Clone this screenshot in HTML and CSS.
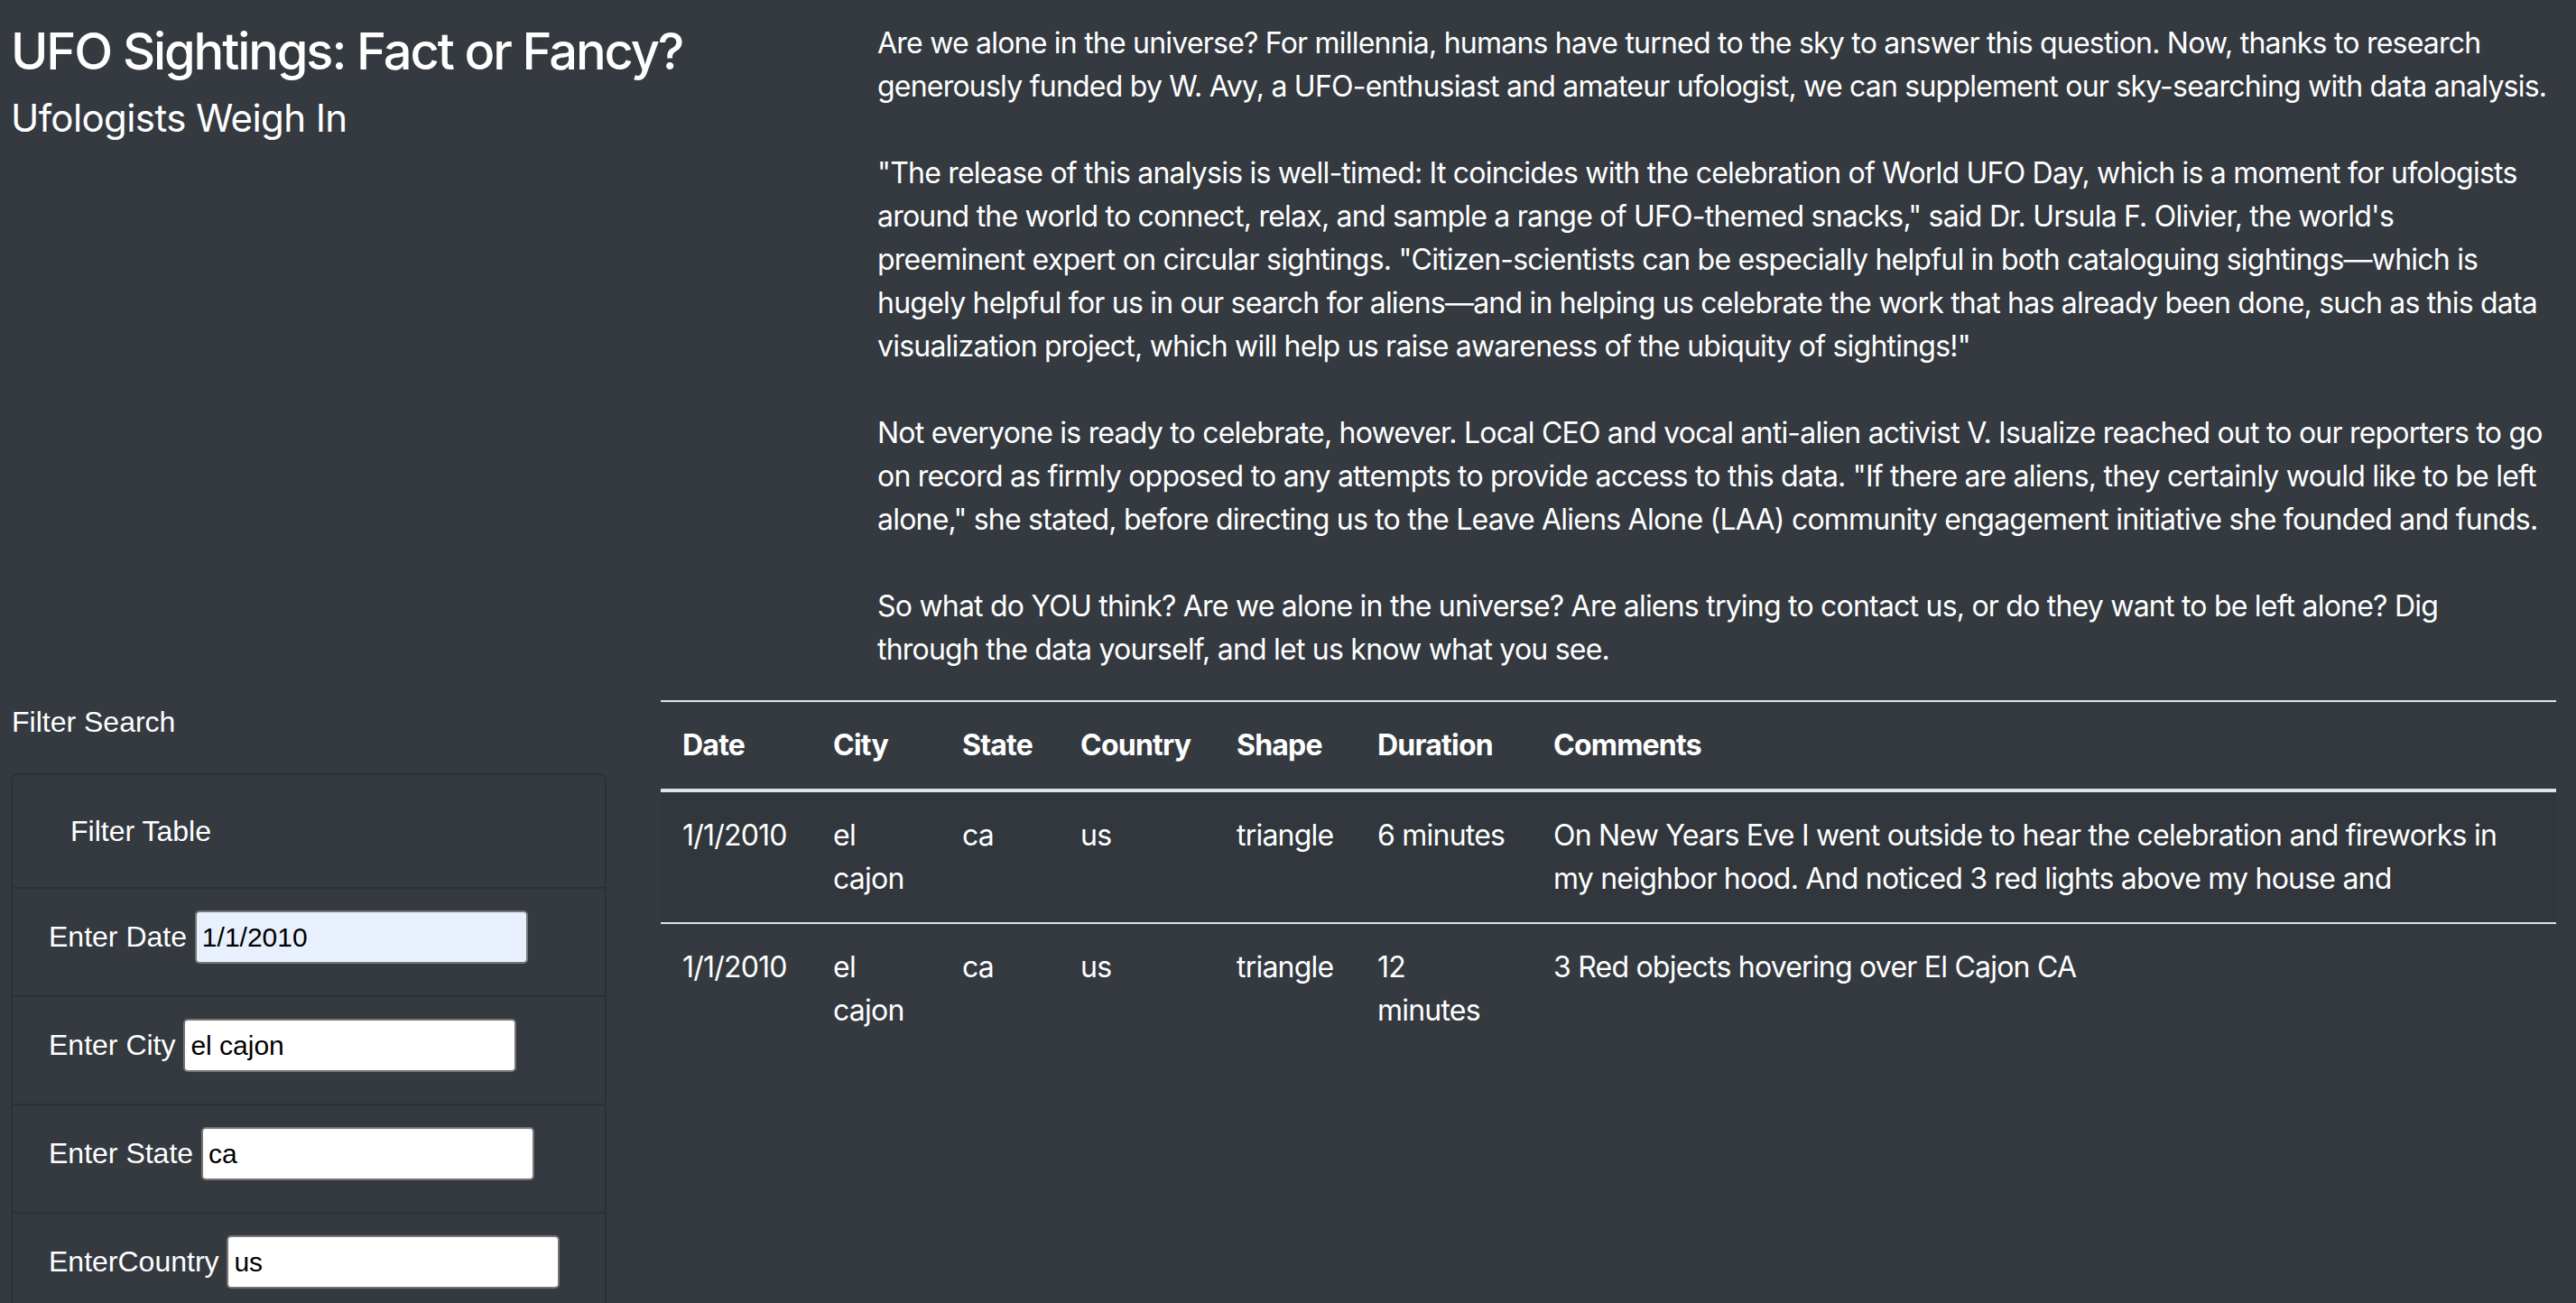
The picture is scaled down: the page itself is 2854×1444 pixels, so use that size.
FILE: index.html
```html
<!DOCTYPE html>
<html lang="en">
<head>
<meta charset="utf-8">
<title>UFO Sightings</title>
<link rel="stylesheet" href="styles.css">
</head>
<body>
<div class="page">
  <div class="top-row">
    <header class="intro">
      <h3 class="title">UFO Sightings: Fact or Fancy?</h3>
      <h5 class="subtitle">Ufologists Weigh In</h5>
    </header>
    <article class="story">
      <p>Are we alone in the universe? For millennia, humans have turned to the sky to answer this question. Now, thanks to research generously funded by W. Avy, a UFO-enthusiast and amateur ufologist, we can supplement our sky-searching with data analysis.</p>
      <p>"The release of this analysis is well-timed: It coincides with the celebration of World UFO Day, which is a moment for ufologists around the world to connect, relax, and sample a range of UFO-themed snacks," said Dr. Ursula F. Olivier, the world's<br>preeminent expert on circular sightings. "Citizen-scientists can be especially helpful in both cataloguing sightings—which is hugely helpful for us in our search for aliens—and in helping us celebrate the work that has already been done, such as this data visualization project, which will help us raise awareness of the ubiquity of sightings!"</p>
      <p>Not everyone is ready to celebrate, however. Local CEO and vocal anti-alien activist V. Isualize reached out to our reporters to go on record as firmly opposed to any attempts to provide access to this data. "If there are aliens, they certainly would like to be left alone," she stated, before directing us to the Leave Aliens Alone (LAA) community engagement initiative she founded and funds.</p>
      <p>So what do YOU think? Are we alone in the universe? Are aliens trying to contact us, or do they want to be left alone? Dig<br>through the data yourself, and let us know what you see.</p>
    </article>
  </div>
  <div class="bottom-row">
    <aside class="filters">
      <div class="filters-title">Filter Search</div>
      <div class="panel">
        <div class="panel-heading">Filter Table</div>
        <form>
          <ul class="filter-list">
            <li class="filter-item"><label class="filter-label" for="datetime">Enter Date</label> <input class="filter-input autofilled" id="datetime" type="text" value="1/1/2010"></li>
            <li class="filter-item"><label class="filter-label" for="city">Enter City</label> <input class="filter-input" id="city" type="text" value="el cajon"></li>
            <li class="filter-item"><label class="filter-label" for="state">Enter State</label> <input class="filter-input" id="state" type="text" value="ca"></li>
            <li class="filter-item"><label class="filter-label" for="country">EnterCountry</label> <input class="filter-input" id="country" type="text" value="us"></li>
          </ul>
        </form>
      </div>
    </aside>
    <section class="results">
      <table class="ufo-table">
        <colgroup>
          <col class="c-date"><col class="c-city"><col class="c-state"><col class="c-country"><col class="c-shape"><col class="c-duration"><col class="c-comments">
        </colgroup>
        <thead>
          <tr><th>Date</th><th>City</th><th>State</th><th>Country</th><th>Shape</th><th>Duration</th><th>Comments</th></tr>
        </thead>
        <tbody>
          <tr><td>1/1/2010</td><td>el cajon</td><td>ca</td><td>us</td><td>triangle</td><td>6 minutes</td><td>On New Years Eve I went outside to hear the celebration and fireworks in my neighbor hood. And noticed 3 red lights above my house and</td></tr>
          <tr><td>1/1/2010</td><td>el cajon</td><td>ca</td><td>us</td><td>triangle</td><td>12 minutes</td><td>3 Red objects hovering over El Cajon CA</td></tr>
        </tbody>
      </table>
    </section>
  </div>
</div>
</body>
</html>
```
FILE: styles.css
```css
html, body {
  margin: 0;
  background: #343a40;
}
body {
  color: #fff;
  font-family: Inter, "Liberation Sans", sans-serif;
  font-size: 32px;
  line-height: 48px;
  letter-spacing: -0.78px;
  overflow: hidden;
  height: 1444px;
}
.page {
  padding: 24px 22px 0 12px;
}
.top-row {
  display: grid;
  grid-template-columns: 900px 1860px;
  column-gap: 60px;
}
.title {
  margin: 0 0 16px;
  font-size: 56px;
  line-height: 67px;
  font-weight: 500;
  letter-spacing: -2.1px;
}
.subtitle {
  margin: 0;
  font-size: 42px;
  line-height: 48px;
  font-weight: 400;
  letter-spacing: -0.6px;
}
.story p {
  margin: 0 0 48px;
}
.story p:last-child {
  margin-bottom: 32px;
}
.bottom-row {
  display: grid;
  grid-template-columns: 660px 2100px;
  column-gap: 60px;
  align-items: start;
}
.filters {
  font-family: "Liberation Sans", Arial, sans-serif;
  letter-spacing: 0;
}
.filters-title {
  margin-bottom: 33px;
  padding-left: 1px;
}
.panel {
  border: 2px solid #2c3136;
  border-radius: 8px;
}
.panel-heading {
  padding: 38px 64px;
}
.filter-list {
  list-style: none;
  margin: 0;
  padding: 0;
}
.filter-item {
  border-top: 2px solid #2c3136;
  padding: 24px 40px;
  height: 70px;
}
.filter-label {
  display: inline-block;
  margin-bottom: 16px;
}
.filter-input {
  box-sizing: border-box;
  width: 369px;
  height: 59px;
  border: 2px solid #767676;
  border-radius: 5px;
  padding: 0 6px;
  background: #fff;
  color: #000;
  font-family: "Liberation Sans", Arial, sans-serif;
  font-size: 30px;
}
.filter-input.autofilled {
  background: #e8f0fe;
}
.ufo-table {
  width: 2100px;
  table-layout: fixed;
  border-collapse: collapse;
}
.c-date { width: 167px; }
.c-city { width: 143px; }
.c-state { width: 131px; }
.c-country { width: 173px; }
.c-shape { width: 156px; }
.c-duration { width: 195px; }
.c-comments { width: 1135px; }
.ufo-table th,
.ufo-table td {
  padding: 24px;
  text-align: left;
  vertical-align: top;
  border-top: 2px solid #dee2e6;
}
.ufo-table th {
  font-weight: 700;
  border-bottom: 4px solid #dee2e6;
}
.ufo-table tbody tr:nth-child(odd) {
  background: rgba(0, 0, 0, 0.05);
}
```
